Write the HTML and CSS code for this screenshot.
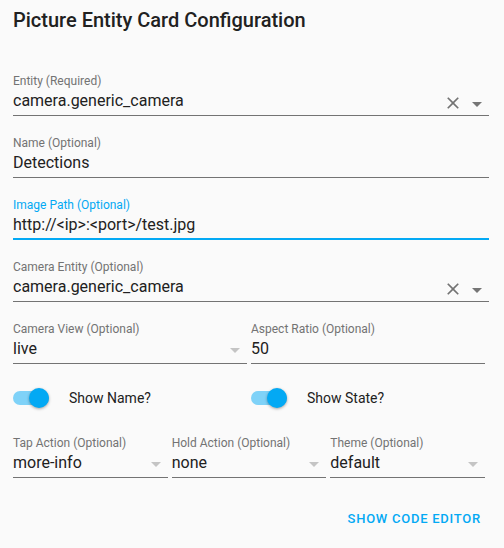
FILE: index.html
```html
<!DOCTYPE html>
<html>
<head>
<meta charset="utf-8">
<link rel="stylesheet" href="styles.css">
</head>
<body>
<div class="editor">
  <h1 class="title">Picture Entity Card Configuration</h1>
  <div class="fields">
    <div class="field">
      <div class="field-label">Entity (Required)</div>
      <div class="field-input">
        <span class="value">camera.generic_camera</span>
        <svg class="clear" viewBox="0 0 24 24" width="20" height="20"><path d="M19 6.41L17.59 5 12 10.59 6.41 5 5 6.41 10.59 12 5 17.59 6.41 19 12 13.41 17.59 19 19 17.59 13.41 12z" fill="#737373"/></svg>
        <span class="arrow dark"></span>
      </div>
    </div>
    <div class="field">
      <div class="field-label">Name (Optional)</div>
      <div class="field-input"><span class="value">Detections</span></div>
    </div>
    <div class="field focused">
      <div class="field-label">Image Path (Optional)</div>
      <div class="field-input"><span class="value">http://&lt;ip&gt;:&lt;port&gt;/test.jpg</span></div>
    </div>
    <div class="field">
      <div class="field-label">Camera Entity (Optional)</div>
      <div class="field-input">
        <span class="value">camera.generic_camera</span>
        <svg class="clear" viewBox="0 0 24 24" width="20" height="20"><path d="M19 6.41L17.59 5 12 10.59 6.41 5 5 6.41 10.59 12 5 17.59 6.41 19 12 13.41 17.59 19 19 17.59 13.41 12z" fill="#737373"/></svg>
        <span class="arrow dark"></span>
      </div>
    </div>
    <div class="row">
      <div class="field">
        <div class="field-label">Camera View (Optional)</div>
        <div class="field-input"><span class="value">live</span><span class="arrow light"></span></div>
      </div>
      <div class="field">
        <div class="field-label">Aspect Ratio (Optional)</div>
        <div class="field-input"><span class="value">50</span></div>
      </div>
    </div>
    <div class="row switches">
      <div class="switch-item">
        <span class="toggle"><span class="track"></span><span class="thumb"></span></span>
        <span class="switch-label">Show Name?</span>
      </div>
      <div class="switch-item">
        <span class="toggle"><span class="track"></span><span class="thumb"></span></span>
        <span class="switch-label">Show State?</span>
      </div>
    </div>
    <div class="row last">
      <div class="field">
        <div class="field-label">Tap Action (Optional)</div>
        <div class="field-input"><span class="value">more-info</span><span class="arrow light"></span></div>
      </div>
      <div class="field">
        <div class="field-label">Hold Action (Optional)</div>
        <div class="field-input"><span class="value">none</span><span class="arrow light"></span></div>
      </div>
      <div class="field">
        <div class="field-label">Theme (Optional)</div>
        <div class="field-input"><span class="value">default</span><span class="arrow light"></span></div>
      </div>
    </div>
  </div>
  <div class="actions">
    <button class="text-button">Show Code Editor</button>
  </div>
</div>
</body>
</html>
```
FILE: styles.css
```css
html, body {
  margin: 0;
  padding: 0;
  background: #fafafa;
}
body {
  font-family: Roboto, "Liberation Sans", sans-serif;
  color: #212121;
}
.editor {
  padding: 8px 15px 0 13px;
}
.title {
  margin: 0;
  font-size: 20px;
  line-height: 24px;
  font-weight: 500;
  color: #212121;
}
.fields {
  margin-top: 42px;
}
.field {
  margin-bottom: 20px;
  min-width: 0;
}
.field-label {
  font-size: 12px;
  line-height: 15px;
  height: 15px;
  color: #737373;
  white-space: nowrap;
}
.field-input {
  display: flex;
  align-items: center;
  height: 24px;
  padding-bottom: 2px;
  border-bottom: 1px solid #737373;
  font-size: 16px;
  line-height: 24px;
  color: #212121;
}
.field.focused .field-label {
  color: #03a9f4;
}
.field.focused .field-input {
  padding-bottom: 1px;
  border-bottom: 2px solid #03a9f4;
}
.value {
  flex: 1;
  white-space: nowrap;
  overflow: hidden;
}
.clear {
  flex: none;
  margin-top: 4px;
}
.arrow {
  flex: none;
  width: 0;
  height: 0;
  border-left: 5px solid transparent;
  border-right: 5px solid transparent;
  border-top: 5px solid #757575;
  margin-top: 5px;
  margin-right: 7px;
}
.arrow.dark {
  margin-left: 9px;
  margin-top: 6px;
}
.arrow.light {
  border-top-color: #c4c4c4;
  margin-top: 3px;
}
.row {
  display: flex;
  gap: 4px;
  padding-right: 4px;
}
.row > .field {
  flex: 1 1 0;
}
.row.last > .field {
  margin-bottom: 0;
}
.switches {
  height: 28px;
  align-items: center;
  margin-bottom: 24px;
}
.switch-item {
  flex: 1 1 0;
  display: flex;
  align-items: center;
}
.toggle {
  position: relative;
  width: 36px;
  height: 14px;
  flex: none;
}
.track {
  display: block;
  width: 36px;
  height: 14px;
  border-radius: 7px;
  background: #7fd2f8;
}
.thumb {
  position: absolute;
  left: 16px;
  top: -3px;
  width: 20px;
  height: 20px;
  border-radius: 50%;
  background: #03a9f4;
  box-shadow: 0 1px 3px rgba(0, 0, 0, 0.35);
}
.switch-label {
  margin-left: 20px;
  font-size: 14px;
  line-height: 24px;
  color: #212121;
}
.actions {
  display: flex;
  justify-content: flex-end;
  margin-top: 23px;
}
.text-button {
  border: none;
  background: transparent;
  padding: 8px 8px 8px 8px;
  font-family: Roboto, "Liberation Sans", sans-serif;
  font-size: 13px;
  line-height: 20px;
  font-weight: 500;
  letter-spacing: 0.75px;
  text-transform: uppercase;
  color: #03a9f4;
}
```
